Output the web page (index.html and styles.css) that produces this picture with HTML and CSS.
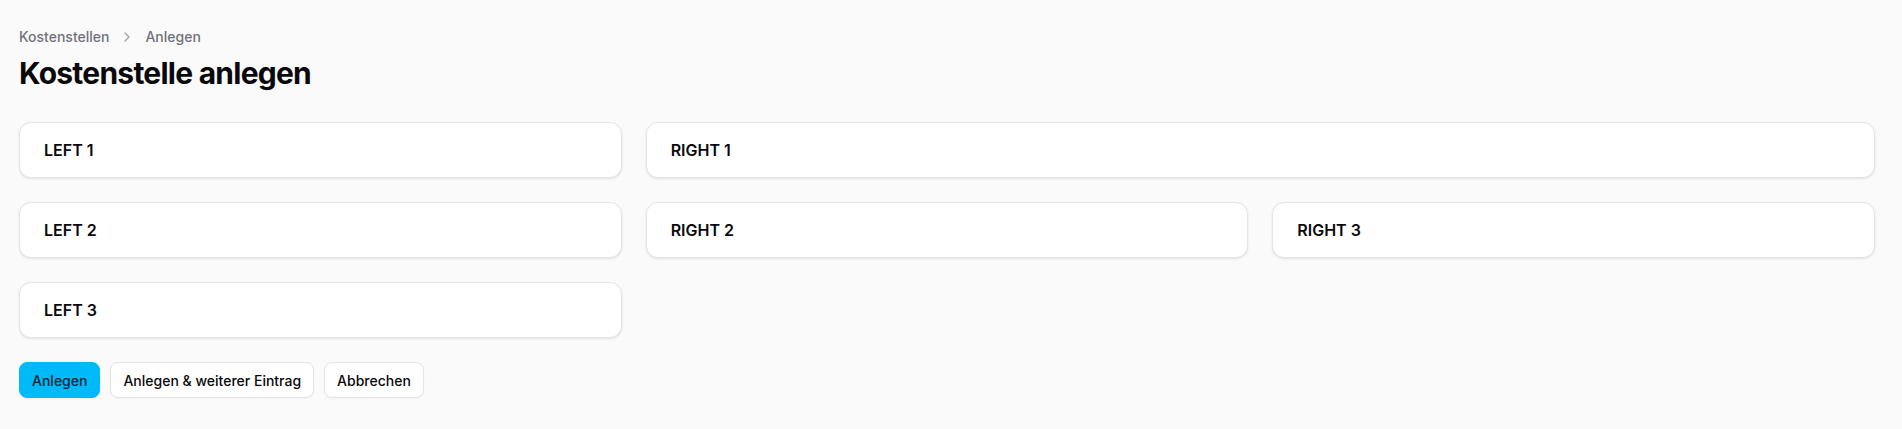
FILE: index.html
```html
<!DOCTYPE html>
<html lang="de">
<head>
<meta charset="utf-8">
<title>Kostenstelle anlegen</title>
<link rel="stylesheet" href="styles.css">
</head>
<body>
<main class="page">
  <nav class="breadcrumb">
    <a class="crumb" href="#">Kostenstellen</a>
    <svg class="chev" viewBox="0 0 24 24" width="16" height="16" fill="none" stroke="currentColor" stroke-width="2" stroke-linecap="round" stroke-linejoin="round"><path d="m9 18 6-6-6-6"/></svg>
    <span class="crumb">Anlegen</span>
  </nav>
  <h1 class="title">Kostenstelle anlegen</h1>
  <div class="grid">
    <section class="card">LEFT 1</section>
    <section class="card span2">RIGHT 1</section>
    <section class="card">LEFT 2</section>
    <section class="card">RIGHT 2</section>
    <section class="card">RIGHT 3</section>
    <section class="card">LEFT 3</section>
  </div>
  <div class="actions">
    <button class="btn primary">Anlegen</button>
    <button class="btn">Anlegen &amp; weiterer Eintrag</button>
    <button class="btn">Abbrechen</button>
  </div>
</main>
</body>
</html>
```
FILE: styles.css
```css
* { box-sizing: border-box; }
html, body { margin: 0; padding: 0; }
body {
  background: #fafafa;
  font-family: Inter, "Noto Sans", sans-serif;
  color: #09090b;
}
.page {
  padding: 27px 27px 24px 19px;
}
.breadcrumb {
  display: flex;
  align-items: center;
  gap: 10px;
  height: 20px;
  font-size: 14px;
  line-height: 20px;
  font-weight: 500;
  color: #71717a;
}
.crumb { color: #71717a; text-decoration: none; }
.chev { color: #a1a1aa; }
.title {
  margin: 8px 0 0;
  font-size: 30px;
  line-height: 36px;
  font-weight: 700;
  letter-spacing: -0.025em;
  color: #09090b;
}
.grid {
  margin-top: 31px;
  display: grid;
  grid-template-columns: repeat(3, 1fr);
  gap: 24px;
}
.card {
  height: 56px;
  display: flex;
  align-items: center;
  padding: 0 24px;
  background: #fff;
  border: 1px solid #e4e4e7;
  border-radius: 12px;
  box-shadow: 0 1px 3px 0 rgba(0,0,0,0.08), 0 1px 2px -1px rgba(0,0,0,0.08);
  font-size: 16px;
  font-weight: 600;
  color: #09090b;
}
.span2 { grid-column: span 2; }
.actions {
  margin-top: 24px;
  display: flex;
  gap: 10px;
}
.btn {
  height: 36px;
  padding: 0 12px;
  border: 1px solid #e4e4e7;
  border-radius: 8px;
  background: #fff;
  font-family: inherit;
  font-size: 14px;
  font-weight: 500;
  color: #09090b;
  box-shadow: 0 1px 2px 0 rgba(0,0,0,0.03);
  cursor: pointer;
}
.btn.primary {
  background: #00b9f8;
  border-color: #00b9f8;
  color: #0c2533;
}
```
